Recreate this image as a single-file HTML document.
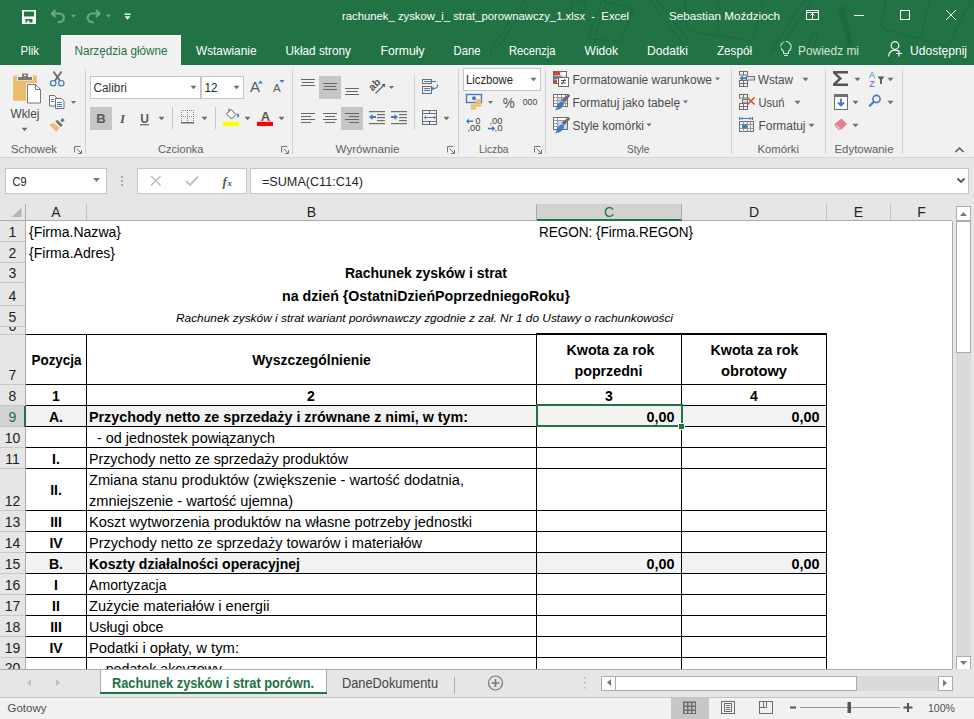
<!DOCTYPE html>
<html><head><meta charset="utf-8"><style>
html,body{margin:0;padding:0;width:974px;height:719px;overflow:hidden;background:#fff}
svg{display:block;font-family:"Liberation Sans",sans-serif}
</style></head><body>
<svg width="974" height="719" viewBox="0 0 974 719">
<rect x="0" y="0" width="974" height="65" fill="#217346" />
<rect x="61" y="35" width="120" height="30" fill="#f7f7f7" />
<rect x="62" y="36" width="119" height="29" fill="#f1f1f1" />
<rect x="0" y="65" width="974" height="92" fill="#f1f1f1" />
<rect x="0" y="157" width="974" height="1" fill="#d6d6d6" />
<rect x="0" y="158" width="974" height="62" fill="#e6e6e6" />
<g fill="#fff"><path d="M22 10h14v14h-14z M24 11.5v5h10v-5z M25.5 19v3.5h1.8v-2h2v2h3.2v-3.5z" fill-rule="evenodd"/></g>
<g fill="none" stroke="#6aa888" stroke-width="2.2"><path d="M52 13.5h7.5a4.3 4.3 0 0 1 0 8.6h-1.5"/><path d="M55.5 10l-3.5 3.5l3.5 3.5"/><path d="M99.5 13.5h-7.5a4.3 4.3 0 0 0 0 8.6h1.5"/><path d="M96 10l3.5 3.5l-3.5 3.5"/></g>
<path d="M71.0 14.8h5l-2.5 3z" fill="#6aa888"/>
<path d="M106.0 14.8h5l-2.5 3z" fill="#6aa888"/>
<rect x="124.5" y="13.5" width="6" height="1.4" fill="#fff"/><path d="M124.5 16.25h6l-3.0 3.5z" fill="#fff"/>
<g fill="none" stroke="#fff" stroke-width="1"><rect x="806.5" y="10.5" width="12" height="9"/><path d="M806.5 12.5h12"/><path d="M812.5 19v-5.5 M810.5 15.5l2-2l2 2"/><path d="M854 15.5h10"/><rect x="900.5" y="10.5" width="9" height="9"/><path d="M946 10l10 10 M956 10l-10 10"/></g>
<g fill="none" stroke="#d3e3d9" stroke-width="1.1"><path d="M783.5 53.5v-2.3c-1.6-1-2.7-2.6-2.7-4.5a5.2 5.2 0 0 1 10.4 0c0 1.9-1.1 3.5-2.7 4.5v2.3z"/><path d="M784 55.5h4"/></g>
<g fill="none" stroke="#fff" stroke-width="1.2"><circle cx="895" cy="45.5" r="3.8"/><path d="M888.5 56.5c0.5-4 3-6.3 6.5-6.3c1.5 0 2.8 0.4 3.8 1.2"/><path d="M899 50.5v6 M896 53.5h6"/></g>
<path d="M13 77a1.5 1.5 0 0 1 1.5-1.5h22.4v25.3h-22.4a1.5 1.5 0 0 1 -1.5-1.5z" fill="#e9bd6d"/>
<rect x="17" y="75.5" width="16" height="5" fill="#f1f1f1"/>
<path d="M18 77h4.2v-3.6h5.6v3.6h4.2v3h-14z" fill="#777"/><rect x="24" y="74.6" width="2" height="1.5" fill="#f1f1f1"/>
<rect x="26" y="83" width="16" height="21" fill="#f1f1f1"/>
<path d="M27.5 84.5h8l5 5v13.5h-13z" fill="#fff" stroke="#777" stroke-width="1"/><path d="M35.5 84.5v5h5" fill="none" stroke="#777" stroke-width="1"/>
<path d="M21.5 127.75h6l-3.0 3.5z" fill="#6e6e6e"/>
<g fill="none"><path d="M53.5 71.5l6.5 9.2 M61.5 71.5l-6.5 9.2" stroke="#6a6a6a" stroke-width="1.9"/><circle cx="53.2" cy="83.2" r="2.7" stroke="#3f7cc4" stroke-width="1.2"/><circle cx="61.3" cy="83.2" r="2.7" stroke="#3f7cc4" stroke-width="1.2"/></g>
<g stroke="#6e6e6e" stroke-width="1" fill="#fff"><path d="M49.5 95.5h5l2 2v8.5h-7z"/><path d="M55.5 98.5h6l2.5 2.5v7.5h-8.5z"/></g><g fill="#3f7cc4"><rect x="51" y="99" width="3" height="1"/><rect x="51" y="101" width="3" height="1"/><rect x="57" y="102" width="5" height="1"/><rect x="57" y="104" width="5" height="1"/><rect x="57" y="106" width="5" height="1"/></g>
<path d="M71.0 101.0h5l-2.5 3z" fill="#6e6e6e"/>
<path d="M62.2 118L64.8 120.1L62.4 122.6L60.5 120.4z M55.2 121.2L57.3 120L62.8 125L60.7 126.9z" fill="#6e6e6e"/><path d="M49.1 124.4L53.7 122.9L59.8 127.8L56.1 131.8z" fill="#e9bd6d"/>
<rect x="90" y="76" width="111" height="23" fill="#c6c6c6"/><rect x="91" y="77" width="109" height="21" fill="#fff"/>
<rect x="201" y="76" width="43" height="23" fill="#c6c6c6"/><rect x="202" y="77" width="41" height="21" fill="#fff"/>
<path d="M190.5 85.75h6l-3.0 3.5z" fill="#6e6e6e"/>
<path d="M233.5 85.75h6l-3.0 3.5z" fill="#6e6e6e"/>
<text x="250" y="92" font-size="15" fill="#595959">A</text><path d="M258 83.5l2.5-3l2.5 3z" fill="#3f7cc4"/>
<text x="273" y="92" font-size="11.5" fill="#595959">A</text><path d="M279.5 80h5l-2.5 3z" fill="#3f7cc4"/>
<rect x="90" y="107" width="22" height="23" fill="#c6c6c6"/>
<text x="101" y="123" font-size="13" font-weight="bold" fill="#595959" text-anchor="middle">B</text>
<text x="122.5" y="123" font-size="13" font-style="italic" font-weight="bold" fill="#595959" text-anchor="middle" font-family="Liberation Serif">I</text>
<text x="144.5" y="122.5" font-size="12" font-weight="bold" fill="#595959" text-anchor="middle">U</text><rect x="140" y="124.2" width="9" height="1.1" fill="#595959"/>
<path d="M158.5 116.75h6l-3.0 3.5z" fill="#6e6e6e"/>
<rect x="172" y="107" width="1" height="22" fill="#c6c6c6"/><rect x="215" y="107" width="1" height="22" fill="#c6c6c6"/>
<rect x="181" y="122" width="13" height="1.5" fill="#666"/><g fill="#888"><rect x="181" y="110" width="1" height="1"/><rect x="181" y="116" width="1" height="1"/><rect x="183" y="110" width="1" height="1"/><rect x="183" y="116" width="1" height="1"/><rect x="185" y="110" width="1" height="1"/><rect x="185" y="116" width="1" height="1"/><rect x="187" y="110" width="1" height="1"/><rect x="187" y="116" width="1" height="1"/><rect x="189" y="110" width="1" height="1"/><rect x="189" y="116" width="1" height="1"/><rect x="191" y="110" width="1" height="1"/><rect x="191" y="116" width="1" height="1"/><rect x="193" y="110" width="1" height="1"/><rect x="193" y="116" width="1" height="1"/><rect x="181" y="112" width="1" height="1"/><rect x="181" y="114" width="1" height="1"/><rect x="181" y="116" width="1" height="1"/><rect x="181" y="118" width="1" height="1"/><rect x="181" y="120" width="1" height="1"/><rect x="187" y="112" width="1" height="1"/><rect x="187" y="114" width="1" height="1"/><rect x="187" y="116" width="1" height="1"/><rect x="187" y="118" width="1" height="1"/><rect x="187" y="120" width="1" height="1"/><rect x="193" y="112" width="1" height="1"/><rect x="193" y="114" width="1" height="1"/><rect x="193" y="116" width="1" height="1"/><rect x="193" y="118" width="1" height="1"/><rect x="193" y="120" width="1" height="1"/></g>
<path d="M201.5 116.75h6l-3.0 3.5z" fill="#6e6e6e"/>
<rect x="223" y="121.8" width="16" height="4.2" fill="#ffff00"/>
<path d="M231 109.5l5 5l-4.5 4.5l-5-5z" fill="#fff" stroke="#555" stroke-width="1"/><path d="M229 111.5v-3" stroke="#555" stroke-width="1"/><path d="M237 113.5a2 2 0 0 1 1.5 3.5l-1 1z" fill="#3f7cc4"/>
<path d="M244.5 116.75h6l-3.0 3.5z" fill="#6e6e6e"/>
<text x="265.5" y="121" font-size="13" font-weight="bold" fill="#595959" text-anchor="middle">A</text><rect x="257" y="121.8" width="16" height="4.2" fill="#ff0000"/>
<path d="M278.5 116.75h6l-3.0 3.5z" fill="#6e6e6e"/>
<rect x="319" y="76" width="22" height="23" fill="#c6c6c6"/><rect x="341" y="107" width="22" height="23" fill="#c6c6c6"/>
<rect x="301" y="79" width="14" height="1" fill="#666666"/><rect x="302" y="82" width="12" height="1" fill="#666666"/><rect x="301" y="85" width="14" height="1" fill="#666666"/>
<rect x="323" y="83" width="14" height="1" fill="#666666"/><rect x="324" y="86" width="12" height="1" fill="#666666"/><rect x="323" y="89" width="14" height="1" fill="#666666"/>
<rect x="345" y="88" width="14" height="1" fill="#666666"/><rect x="346" y="91" width="12" height="1" fill="#666666"/><rect x="345" y="94" width="14" height="1" fill="#666666"/>
<rect x="301" y="113" width="14" height="1" fill="#666666"/><rect x="301" y="116" width="10" height="1" fill="#666666"/><rect x="301" y="119" width="14" height="1" fill="#666666"/><rect x="301" y="122" width="10" height="1" fill="#666666"/>
<rect x="323" y="113" width="14" height="1" fill="#666666"/><rect x="325" y="116" width="10" height="1" fill="#666666"/><rect x="323" y="119" width="14" height="1" fill="#666666"/><rect x="325" y="122" width="10" height="1" fill="#666666"/>
<rect x="345" y="113" width="14" height="1" fill="#666666"/><rect x="349" y="116" width="10" height="1" fill="#666666"/><rect x="345" y="119" width="14" height="1" fill="#666666"/><rect x="349" y="122" width="10" height="1" fill="#666666"/>
<text x="0" y="0" font-size="10.5" font-weight="bold" fill="#555" transform="translate(372.5 91.5) rotate(-45)">ab</text><path d="M375.5 93.5l9-9" stroke="#595959" stroke-width="1.1"/><path d="M385.2 83.8l-3.6 0.4l3.2 3.2z" fill="#595959"/>
<path d="M389.0 86.0h5l-2.5 3z" fill="#6e6e6e"/>
<rect x="369" y="111" width="16" height="1.2" fill="#6e6e6e"/><rect x="369" y="123" width="16" height="1.2" fill="#6e6e6e"/><rect x="377" y="114" width="8" height="1.2" fill="#6e6e6e"/><rect x="377" y="117" width="8" height="1.2" fill="#6e6e6e"/><rect x="377" y="120" width="8" height="1.2" fill="#6e6e6e"/>
<path d="M369 117l3.5-3v2h3.5v2h-3.5v2z" fill="#3f7cc4"/>
<rect x="391" y="111" width="16" height="1.2" fill="#6e6e6e"/><rect x="391" y="123" width="16" height="1.2" fill="#6e6e6e"/><rect x="399" y="114" width="8" height="1.2" fill="#6e6e6e"/><rect x="399" y="117" width="8" height="1.2" fill="#6e6e6e"/><rect x="399" y="120" width="8" height="1.2" fill="#6e6e6e"/>
<path d="M398 117l-3.5-3v2h-3.5v2h3.5v2z" fill="#3f7cc4"/>
<rect x="414" y="75" width="1" height="55" fill="#d0d0d0"/>
<g fill="none" stroke="#6e6e6e" stroke-width="1"><rect x="422.5" y="79.5" width="9" height="4"/><rect x="422.5" y="86.5" width="9" height="7"/></g><rect x="424" y="81" width="12" height="1" fill="#3f7cc4"/><rect x="424" y="88" width="6" height="1" fill="#3f7cc4"/><rect x="424" y="90" width="6" height="1" fill="#3f7cc4"/><path d="M437.5 84.5v1a3 3 0 0 1 -3 3h-2" fill="none" stroke="#3f7cc4" stroke-width="1.2"/><path d="M431 88.5l2.5-2.3v4.6z" fill="#3f7cc4"/>
<g fill="none" stroke="#6e6e6e" stroke-width="1"><rect x="422.5" y="110.5" width="14" height="14"/><path d="M423 113.5h13 M423 121.5h13 M429.5 111v2.5 M429.5 121.5v3"/></g><path d="M424.5 117.5h11" stroke="#3f7cc4" stroke-width="1"/><path d="M424 117.5l2-2v4z M436 117.5l-2-2v4z" fill="#3f7cc4"/>
<path d="M443.5 116.75h6l-3.0 3.5z" fill="#6e6e6e"/>
<rect x="463" y="68" width="78" height="23" fill="#c6c6c6"/><rect x="464" y="69" width="76" height="21" fill="#fff"/>
<path d="M530.5 77.75h6l-3.0 3.5z" fill="#6e6e6e"/>
<rect x="466.5" y="94.5" width="15" height="8" fill="none" stroke="#3f7cc4" stroke-width="1.4"/><circle cx="474" cy="98.3" r="2" fill="#3f7cc4"/><g fill="#e9bd6d"><ellipse cx="478.5" cy="100.5" rx="3.2" ry="1.3"/><ellipse cx="478.5" cy="103" rx="3.2" ry="1.3"/><ellipse cx="478.5" cy="105.5" rx="3.2" ry="1.3"/><ellipse cx="473.5" cy="105.5" rx="3.2" ry="1.3"/><ellipse cx="473.5" cy="108.3" rx="3.2" ry="1.3"/></g>
<path d="M488.0 101.0h5l-2.5 3z" fill="#6e6e6e"/>
<text x="508.7" y="108.3" font-size="15.5" fill="#505050" text-anchor="middle" textLength="12" lengthAdjust="spacingAndGlyphs">%</text>
<text x="530" y="104.8" font-size="9" fill="#404040" text-anchor="middle" textLength="14.5" lengthAdjust="spacingAndGlyphs">000</text>
<g font-size="9.5" fill="#404040"><text x="475.5" y="123.8" textLength="5" lengthAdjust="spacingAndGlyphs">0</text><text x="467.5" y="131.3" textLength="13" lengthAdjust="spacingAndGlyphs">,00</text><text x="489.5" y="124" textLength="13" lengthAdjust="spacingAndGlyphs">,00</text><text x="494.5" y="131.3" textLength="8" lengthAdjust="spacingAndGlyphs">,0</text></g><path d="M466 121.2l3-2.7v2h4.2v1.4h-4.2v2z" fill="#3f7cc4"/><path d="M495.2 128.5l-3-2.7v2h-4.2v1.4h4.2v2z" fill="#3f7cc4"/>
<g><rect x="553.5" y="71.5" width="13" height="12" fill="#fff" stroke="#6e6e6e" stroke-width="1"/><rect x="554" y="72" width="6" height="3.5" fill="#d9472b"/><rect x="554" y="76" width="8" height="3" fill="#3f7cc4"/><rect x="554" y="79.5" width="3" height="4" fill="#d9472b"/><path d="M561 72v4 M554 76h12" stroke="#bbb" stroke-width="0.8"/><rect x="558.5" y="77.5" width="10" height="9" fill="#fff" stroke="#6e6e6e" stroke-width="1"/><path d="M561 80.5h5 M561 83h5 M565 79l-3 5.5" stroke="#444" stroke-width="0.9"/></g>
<rect x="553.5" y="94.5" width="14" height="12" fill="#fff" stroke="#6e6e6e" stroke-width="1"/><rect x="557.5" y="97.5" width="8" height="6.5" fill="#c5d9f0"/><path d="M557.5 94.5v12 M561.5 94.5v12 M565.5 94.5v12 M554 97.5h13.5 M554 100.5h13.5 M554 103.5h13.5" stroke="#9a9a9a" stroke-width="1"/><rect x="553.5" y="94.5" width="14" height="12" fill="none" stroke="#6e6e6e" stroke-width="1"/><path d="M568.5 94.0l1.8 1.8l-6.2 6.6l-2.6-2.6z" fill="#6e6e6e"/><ellipse cx="560.2" cy="105.5" rx="4.6" ry="2.6" transform="rotate(-48 560.2 105.5)" fill="#3f7cc4"/><path d="M555.5 110.0l3-2" stroke="#3f7cc4" stroke-width="1.5"/>
<rect x="553.5" y="117.5" width="14" height="12" fill="#fff" stroke="#6e6e6e" stroke-width="1"/><rect x="557.5" y="120.5" width="10" height="8.5" fill="#c5d9f0"/><path d="M557.5 117.5v12 M554 120.5h13.5 M554 123.5h3.5 M554 126.5h3.5" stroke="#9a9a9a" stroke-width="1"/><rect x="553.5" y="117.5" width="14" height="12" fill="none" stroke="#6e6e6e" stroke-width="1"/><path d="M568.5 117.0l1.8 1.8l-6.2 6.6l-2.6-2.6z" fill="#6e6e6e"/><ellipse cx="560.2" cy="128.5" rx="4.6" ry="2.6" transform="rotate(-48 560.2 128.5)" fill="#3f7cc4"/><path d="M555.5 133.0l3-2" stroke="#3f7cc4" stroke-width="1.5"/>
<g fill="none" stroke="#6e6e6e" stroke-width="1"><rect x="739.5" y="71.5" width="8" height="3.5"/><path d="M743.5 71.5v3.5"/><rect x="739.5" y="80.5" width="8" height="6"/><path d="M743.5 80.5v6 M739.5 83.5h8"/><rect x="746.5" y="76.5" width="8" height="3.5"/></g><rect x="747.5" y="77.5" width="3" height="1.5" fill="#c5d9f0"/><rect x="751" y="77.5" width="3" height="1.5" fill="#c5d9f0"/><path d="M739.5 78.2l3.5-3v2h3.5v2h-3.5v2z" fill="#3f7cc4"/>
<g fill="none" stroke="#6e6e6e" stroke-width="1"><rect x="739.5" y="94.5" width="8" height="3.5"/><path d="M743.5 94.5v3.5"/><rect x="739.5" y="103.5" width="8" height="6"/><path d="M743.5 103.5v6 M739.5 106.5h8"/><rect x="742.5" y="99.5" width="5" height="3.5"/></g><rect x="743.5" y="100.5" width="3" height="1.5" fill="#c5d9f0"/><path d="M747.5 97.5l7 7 M754.5 97.5l-7 7" stroke="#d9472b" stroke-width="1.5"/>
<rect x="739" y="117" width="1.2" height="3" fill="#3f7cc4"/><rect x="751.8" y="117" width="1.2" height="3" fill="#3f7cc4"/><path d="M740.5 118.5h11" stroke="#3f7cc4" stroke-width="1"/><path d="M740.5 118.5l2-1.7v3.4z M751.5 118.5l-2-1.7v3.4z" fill="#3f7cc4"/><g fill="none" stroke="#6e6e6e" stroke-width="1"><rect x="739.5" y="121.5" width="14" height="10"/><path d="M739.5 124.5h14 M739.5 128.5h14 M743.5 121.5v10 M747.5 121.5v10 M750.5 121.5v10" stroke="#9a9a9a"/></g><rect x="742" y="124.5" width="5" height="4" fill="#3f7cc4"/>
<path d="M802.5 77.75h6l-3.0 3.5z" fill="#6e6e6e"/>
<path d="M794.5 100.75h6l-3.0 3.5z" fill="#6e6e6e"/>
<path d="M808.5 123.75h6l-3.0 3.5z" fill="#6e6e6e"/>
<path d="M833 71h15v2.4h-11.2l5.3 5.1l-5.3 5.1h11.2v2.4h-15v-2.3l5.5-5.2l-5.5-5.2z" fill="#555"/>
<path d="M854.5 77.75h6l-3.0 3.5z" fill="#6e6e6e"/>
<text x="872" y="77.8" font-size="9" fill="#3f7cc4" text-anchor="middle">A</text><text x="872" y="87" font-size="9" fill="#8b4fb0" text-anchor="middle">Z</text><path d="M877.5 76.5h7l-2.6 3.3v4.2h-1.8v-4.2z" fill="#595959"/>
<path d="M887.5 77.75h6l-3.0 3.5z" fill="#6e6e6e"/>
<rect x="834" y="94" width="14" height="16" fill="#6e6e6e"/><rect x="835" y="97" width="12" height="12" fill="#fff"/><path d="M841 98.5v7 M838 102.5l3 3l3-3" fill="none" stroke="#3f7cc4" stroke-width="1.8"/>
<path d="M852.5 100.75h6l-3.0 3.5z" fill="#6e6e6e"/>
<circle cx="876.5" cy="99" r="3.6" fill="none" stroke="#3f7cc4" stroke-width="1.6"/><path d="M873.8 101.8l-4 4" stroke="#3f7cc4" stroke-width="2.2" stroke-linecap="round"/>
<path d="M887.5 100.75h6l-3.0 3.5z" fill="#6e6e6e"/>
<path d="M841.5 118.5l5.5 5.5l-6 6l-2.3-0.2l-4-4l0-1.8z" fill="#e87c95"/><path d="M836.2 125l5 5" stroke="#f1f1f1" stroke-width="1"/>
<path d="M852.5 123.75h6l-3.0 3.5z" fill="#6e6e6e"/>
<path d="M955.5 152l4-4l4 4" fill="none" stroke="#555" stroke-width="1.5"/>
<rect x="85" y="69" width="1" height="85" fill="#d2d2d2"/>
<rect x="292" y="69" width="1" height="85" fill="#d2d2d2"/>
<rect x="458" y="69" width="1" height="85" fill="#d2d2d2"/>
<rect x="545" y="69" width="1" height="85" fill="#d2d2d2"/>
<rect x="731" y="69" width="1" height="85" fill="#d2d2d2"/>
<rect x="825" y="69" width="1" height="85" fill="#d2d2d2"/>
<rect x="902" y="69" width="1" height="85" fill="#d2d2d2"/>
<g fill="none" stroke="#777" stroke-width="1"><path d="M74.5 152.5v-6h6"/><path d="M76.5 148.5l4.5 4.5 M81.5 150v3.5h-3.5"/></g>
<g fill="none" stroke="#777" stroke-width="1"><path d="M281.5 152.5v-6h6"/><path d="M283.5 148.5l4.5 4.5 M288.5 150v3.5h-3.5"/></g>
<g fill="none" stroke="#777" stroke-width="1"><path d="M447.5 152.5v-6h6"/><path d="M449.5 148.5l4.5 4.5 M454.5 150v3.5h-3.5"/></g>
<g fill="none" stroke="#777" stroke-width="1"><path d="M534.5 152.5v-6h6"/><path d="M536.5 148.5l4.5 4.5 M541.5 150v3.5h-3.5"/></g>
<g fill="none" stroke="#1c6840" stroke-width="1.1" opacity="0.9"><path d="M463 24c-2-4-1-12 4-14c4-2 7 2 6 6l-3 10"/><path d="M529 3L495 51 M524 1L491 49 M495 51l-4 4l0-6"/><path d="M571 4l13-3l3 9l-13 4z"/><path d="M602 0L633 9L621 41L588 39L602 0 M606 3L594 38"/><path d="M650 0L683 44 M657 0L689 41 M683 44l3 4l1-6"/><path d="M685 0L686 27Q688 31 700 33L753 41L763 0 M718 0L718 35"/><path d="M804 0L774 47 M811 2L780 49 M774 47l-3 6l6-4"/><path d="M805 54l8-20c2-3 5-2 5 1l-7 19"/><path d="M886 0L881 25Q882 29 890 31L948 46L971 0 M929 0L921 38"/></g>
<path d="M838 9Q841 4 845 8L853 44L848 47z" fill="#1c6840" opacity="0.8"/>
<text x="342" y="20" font-size="11" fill="#fff" textLength="287" lengthAdjust="spacingAndGlyphs" >rachunek_ zyskow_i_ strat_porownawczy_1.xlsx  -  Excel</text>
<text x="669" y="20" font-size="11" fill="#fff" textLength="111" lengthAdjust="spacingAndGlyphs" >Sebastian Moździoch</text>
<text x="20.5" y="55" font-size="12" fill="#fff" textLength="18.5" lengthAdjust="spacingAndGlyphs" >Plik</text>
<text x="196" y="55" font-size="12" fill="#fff" textLength="60.5" lengthAdjust="spacingAndGlyphs" >Wstawianie</text>
<text x="285.5" y="55" font-size="12" fill="#fff" textLength="65.5" lengthAdjust="spacingAndGlyphs" >Układ strony</text>
<text x="380.5" y="55" font-size="12" fill="#fff" textLength="44.0" lengthAdjust="spacingAndGlyphs" >Formuły</text>
<text x="453.5" y="55" font-size="12" fill="#fff" textLength="27.0" lengthAdjust="spacingAndGlyphs" >Dane</text>
<text x="509" y="55" font-size="12" fill="#fff" textLength="46.5" lengthAdjust="spacingAndGlyphs" >Recenzja</text>
<text x="584.5" y="55" font-size="12" fill="#fff" textLength="33.5" lengthAdjust="spacingAndGlyphs" >Widok</text>
<text x="647" y="55" font-size="12" fill="#fff" textLength="41" lengthAdjust="spacingAndGlyphs" >Dodatki</text>
<text x="717" y="55" font-size="12" fill="#fff" textLength="35" lengthAdjust="spacingAndGlyphs" >Zespół</text>
<text x="910" y="55" font-size="12" fill="#fff" textLength="57" lengthAdjust="spacingAndGlyphs" >Udostępnij</text>
<text x="74.5" y="55" font-size="12" fill="#217346" textLength="93" lengthAdjust="spacingAndGlyphs" >Narzędzia główne</text>
<text x="798" y="55" font-size="12" fill="#d3e3d9" textLength="61" lengthAdjust="spacingAndGlyphs" >Powiedz mi</text>
<text x="10.5" y="118" font-size="12" fill="#4a4a4a" textLength="29" lengthAdjust="spacingAndGlyphs" >Wklej</text>
<text x="11" y="153" font-size="11" fill="#606060" textLength="46" lengthAdjust="spacingAndGlyphs" >Schowek</text>
<text x="158" y="153" font-size="11" fill="#606060" textLength="45.5" lengthAdjust="spacingAndGlyphs" >Czcionka</text>
<text x="335.5" y="153" font-size="11" fill="#606060" textLength="64.0" lengthAdjust="spacingAndGlyphs" >Wyrównanie</text>
<text x="479" y="153" font-size="11" fill="#606060" textLength="29.5" lengthAdjust="spacingAndGlyphs" >Liczba</text>
<text x="627" y="153" font-size="11" fill="#606060" textLength="22.5" lengthAdjust="spacingAndGlyphs" >Style</text>
<text x="757.5" y="153" font-size="11" fill="#606060" textLength="41.5" lengthAdjust="spacingAndGlyphs" >Komórki</text>
<text x="834.5" y="153" font-size="11" fill="#606060" textLength="59.0" lengthAdjust="spacingAndGlyphs" >Edytowanie</text>
<text x="93.5" y="92" font-size="12" fill="#333" textLength="33.5" lengthAdjust="spacingAndGlyphs" >Calibri</text>
<text x="204.5" y="92" font-size="12" fill="#262626" textLength="13" lengthAdjust="spacingAndGlyphs" >12</text>
<text x="466" y="84" font-size="12" fill="#262626" textLength="47" lengthAdjust="spacingAndGlyphs" >Liczbowe</text>
<text x="572.5" y="84" font-size="12" fill="#4a4a4a" textLength="139.5" lengthAdjust="spacingAndGlyphs" >Formatowanie warunkowe</text>
<text x="572.5" y="107" font-size="12" fill="#4a4a4a" textLength="107.5" lengthAdjust="spacingAndGlyphs" >Formatuj jako tabelę</text>
<text x="572.5" y="129.5" font-size="12" fill="#4a4a4a" textLength="71.5" lengthAdjust="spacingAndGlyphs" >Style komórki</text>
<path d="M715 77.5h5l-2.5 3z M683 100.5h5l-2.5 3z M646.5 123.5h5l-2.5 3z" fill="#6e6e6e"/>
<text x="758" y="84" font-size="12" fill="#4a4a4a" textLength="35" lengthAdjust="spacingAndGlyphs" >Wstaw</text>
<text x="758.5" y="107" font-size="12" fill="#4a4a4a" textLength="26" lengthAdjust="spacingAndGlyphs" >Usuń</text>
<text x="758.5" y="129.5" font-size="12" fill="#4a4a4a" textLength="47" lengthAdjust="spacingAndGlyphs" >Formatuj</text>
<rect x="5" y="168" width="102" height="26" fill="#c6c6c6" />
<rect x="6" y="169" width="100" height="24" fill="#fff" />
<text x="12.5" y="186" font-size="12" fill="#262626" textLength="14" lengthAdjust="spacingAndGlyphs" >C9</text>
<rect x="137" y="168" width="110" height="26" fill="#c6c6c6" />
<rect x="138" y="169" width="108" height="24" fill="#fff" />
<rect x="250" y="168" width="719" height="26" fill="#c6c6c6" />
<rect x="251" y="169" width="717" height="24" fill="#fff" />
<text x="262" y="186" font-size="12" fill="#262626" textLength="101" lengthAdjust="spacingAndGlyphs" >=SUMA(C11:C14)</text>
<rect x="0" y="220" width="952" height="1" fill="#ababab" />
<rect x="0" y="221" width="25" height="448" fill="#e6e6e6" />
<rect x="25" y="204" width="1" height="465" fill="#ababab" />
<rect x="26" y="221" width="926" height="448" fill="#fff" />
<rect x="952" y="204" width="1" height="466" fill="#ababab" />
<rect x="537" y="204" width="144" height="15" fill="#d2d2d2" />
<rect x="537" y="219" width="145" height="2" fill="#217346" />
<rect x="86" y="204" width="1" height="16" fill="#c0c0c0" />
<rect x="536" y="204" width="1" height="16" fill="#ababab" />
<rect x="681" y="204" width="1" height="16" fill="#ababab" />
<rect x="826" y="204" width="1" height="16" fill="#c0c0c0" />
<rect x="890" y="204" width="1" height="16" fill="#c0c0c0" />
<text x="56.0" y="217" font-size="14" fill="#222" text-anchor="middle" >A</text>
<text x="311.5" y="217" font-size="14" fill="#222" text-anchor="middle" >B</text>
<text x="609.0" y="217" font-size="14" fill="#217346" text-anchor="middle" >C</text>
<text x="754.0" y="217" font-size="14" fill="#222" text-anchor="middle" >D</text>
<text x="858.5" y="217" font-size="14" fill="#222" text-anchor="middle" >E</text>
<text x="921.5" y="217" font-size="14" fill="#222" text-anchor="middle" >F</text>
<rect x="0" y="241" width="25" height="1" fill="#c8c8c8" />
<text x="12.5" y="237" font-size="14" fill="#222" text-anchor="middle" >1</text>
<rect x="0" y="262" width="25" height="1" fill="#c8c8c8" />
<text x="12.5" y="258" font-size="14" fill="#222" text-anchor="middle" >2</text>
<rect x="0" y="282" width="25" height="1" fill="#c8c8c8" />
<text x="12.5" y="278" font-size="14" fill="#222" text-anchor="middle" >3</text>
<rect x="0" y="305" width="25" height="1" fill="#c8c8c8" />
<text x="12.5" y="301" font-size="14" fill="#222" text-anchor="middle" >4</text>
<rect x="0" y="326" width="25" height="1" fill="#c8c8c8" />
<text x="12.5" y="322" font-size="14" fill="#222" text-anchor="middle" >5</text>
<rect x="0" y="334" width="25" height="1" fill="#c8c8c8" />
<text x="12.5" y="331" font-size="14" fill="#222" text-anchor="middle" clip-path="url(#r6)">6</text>
<rect x="0" y="384" width="25" height="1" fill="#c8c8c8" />
<text x="12.5" y="380" font-size="14" fill="#222" text-anchor="middle" >7</text>
<rect x="0" y="405" width="25" height="1" fill="#c8c8c8" />
<text x="12.5" y="401" font-size="14" fill="#222" text-anchor="middle" >8</text>
<rect x="0" y="426" width="25" height="1" fill="#c8c8c8" />
<rect x="0" y="406" width="24" height="20" fill="#d2d2d2" />
<rect x="24" y="406" width="2" height="21" fill="#217346" />
<text x="12.5" y="422" font-size="14" fill="#217346" text-anchor="middle" >9</text>
<rect x="0" y="447" width="25" height="1" fill="#c8c8c8" />
<text x="12.5" y="443" font-size="14" fill="#222" text-anchor="middle" >10</text>
<rect x="0" y="468" width="25" height="1" fill="#c8c8c8" />
<text x="12.5" y="464" font-size="14" fill="#222" text-anchor="middle" >11</text>
<rect x="0" y="510" width="25" height="1" fill="#c8c8c8" />
<text x="12.5" y="506" font-size="14" fill="#222" text-anchor="middle" >12</text>
<rect x="0" y="531" width="25" height="1" fill="#c8c8c8" />
<text x="12.5" y="527" font-size="14" fill="#222" text-anchor="middle" >13</text>
<rect x="0" y="552" width="25" height="1" fill="#c8c8c8" />
<text x="12.5" y="548" font-size="14" fill="#222" text-anchor="middle" >14</text>
<rect x="0" y="573" width="25" height="1" fill="#c8c8c8" />
<text x="12.5" y="569" font-size="14" fill="#222" text-anchor="middle" >15</text>
<rect x="0" y="594" width="25" height="1" fill="#c8c8c8" />
<text x="12.5" y="590" font-size="14" fill="#222" text-anchor="middle" >16</text>
<rect x="0" y="615" width="25" height="1" fill="#c8c8c8" />
<text x="12.5" y="611" font-size="14" fill="#222" text-anchor="middle" >17</text>
<rect x="0" y="636" width="25" height="1" fill="#c8c8c8" />
<text x="12.5" y="632" font-size="14" fill="#222" text-anchor="middle" >18</text>
<rect x="0" y="657" width="25" height="1" fill="#c8c8c8" />
<text x="12.5" y="653" font-size="14" fill="#222" text-anchor="middle" >19</text>
<clipPath id="r6"><rect x="0" y="327" width="25" height="7"/></clipPath>
<clipPath id="r20"><rect x="0" y="658" width="952" height="11"/></clipPath>
<text x="12.5" y="673" font-size="14" fill="#222" text-anchor="middle" clip-path="url(#r20)">20</text>
<rect x="26" y="406" width="800" height="20" fill="#f2f2f2" />
<rect x="26" y="553" width="800" height="20" fill="#f2f2f2" />
<rect x="26" y="334" width="800" height="1" fill="#000" />
<rect x="26" y="384" width="800" height="1" fill="#000" />
<rect x="26" y="405" width="800" height="1" fill="#000" />
<rect x="26" y="426" width="800" height="1" fill="#000" />
<rect x="26" y="447" width="800" height="1" fill="#000" />
<rect x="26" y="468" width="800" height="1" fill="#000" />
<rect x="26" y="510" width="800" height="1" fill="#000" />
<rect x="26" y="531" width="800" height="1" fill="#000" />
<rect x="26" y="552" width="800" height="1" fill="#000" />
<rect x="26" y="573" width="800" height="1" fill="#000" />
<rect x="26" y="594" width="800" height="1" fill="#000" />
<rect x="26" y="615" width="800" height="1" fill="#000" />
<rect x="26" y="636" width="800" height="1" fill="#000" />
<rect x="26" y="657" width="800" height="1" fill="#000" />
<rect x="536" y="333" width="291" height="1" fill="#000" />
<rect x="86" y="334" width="1" height="335" fill="#000" />
<rect x="681" y="334" width="1" height="335" fill="#000" />
<rect x="536" y="333" width="1" height="336" fill="#000" />
<rect x="826" y="333" width="1" height="336" fill="#000" />
<rect x="536" y="404" width="147" height="2" fill="#217346" />
<rect x="536" y="425" width="142" height="2" fill="#217346" />
<rect x="536" y="404" width="2" height="23" fill="#217346" />
<rect x="681" y="404" width="2" height="19" fill="#217346" />
<rect x="678" y="423" width="7" height="7" fill="#fff" />
<rect x="679" y="424" width="5" height="5" fill="#217346" />
<text x="29" y="237" font-size="14" fill="#000" textLength="92" lengthAdjust="spacingAndGlyphs" >{Firma.Nazwa}</text>
<text x="29" y="258" font-size="14" fill="#000" textLength="86" lengthAdjust="spacingAndGlyphs" >{Firma.Adres}</text>
<text x="539" y="237" font-size="14" fill="#000" textLength="154" lengthAdjust="spacingAndGlyphs" >REGON: {Firma.REGON}</text>
<text x="426" y="278" font-size="14" fill="#000" font-weight="bold" text-anchor="middle" textLength="162" lengthAdjust="spacingAndGlyphs" >Rachunek zysków i strat</text>
<text x="426" y="301" font-size="14" fill="#000" font-weight="bold" text-anchor="middle" textLength="288" lengthAdjust="spacingAndGlyphs" >na dzień {OstatniDzieńPoprzedniegoRoku}</text>
<text x="424.5" y="321.5" font-size="10.5" fill="#000" font-style="italic" text-anchor="middle" textLength="497" lengthAdjust="spacingAndGlyphs" >Rachunek zysków i strat wariant porównawczy zgodnie z zał. Nr 1 do Ustawy o rachunkowości</text>
<text x="56.5" y="365" font-size="14" fill="#000" font-weight="bold" text-anchor="middle" textLength="50" lengthAdjust="spacingAndGlyphs" >Pozycja</text>
<text x="311.5" y="365" font-size="14" fill="#000" font-weight="bold" text-anchor="middle" textLength="118.5" lengthAdjust="spacingAndGlyphs" >Wyszczególnienie</text>
<text x="610.5" y="355" font-size="14" fill="#000" font-weight="bold" text-anchor="middle" textLength="88" lengthAdjust="spacingAndGlyphs" >Kwota za rok</text>
<text x="608.5" y="376" font-size="14" fill="#000" font-weight="bold" text-anchor="middle" textLength="68" lengthAdjust="spacingAndGlyphs" >poprzedni</text>
<text x="754.5" y="355" font-size="14" fill="#000" font-weight="bold" text-anchor="middle" textLength="88" lengthAdjust="spacingAndGlyphs" >Kwota za rok</text>
<text x="754" y="376" font-size="14" fill="#000" font-weight="bold" text-anchor="middle" textLength="66" lengthAdjust="spacingAndGlyphs" >obrotowy</text>
<text x="56" y="401" font-size="14" fill="#000" font-weight="bold" text-anchor="middle" >1</text>
<text x="311" y="401" font-size="14" fill="#000" font-weight="bold" text-anchor="middle" >2</text>
<text x="609" y="401" font-size="14" fill="#000" font-weight="bold" text-anchor="middle" >3</text>
<text x="754" y="401" font-size="14" fill="#000" font-weight="bold" text-anchor="middle" >4</text>
<text x="56" y="422" font-size="14" fill="#000" font-weight="bold" text-anchor="middle" >A.</text>
<text x="89" y="422" font-size="14" fill="#000" font-weight="bold" textLength="379" lengthAdjust="spacingAndGlyphs" >Przychody netto ze sprzedaży i zrównane z nimi, w tym:</text>
<text x="56" y="443" font-size="14" fill="#000" font-weight="bold" text-anchor="middle" ></text>
<text x="97" y="443" font-size="14" fill="#000" textLength="178" lengthAdjust="spacingAndGlyphs" >- od jednostek powiązanych</text>
<text x="56" y="464" font-size="14" fill="#000" font-weight="bold" text-anchor="middle" >I.</text>
<text x="89" y="464" font-size="14" fill="#000" textLength="259" lengthAdjust="spacingAndGlyphs" >Przychody netto ze sprzedaży produktów</text>
<text x="56" y="527" font-size="14" fill="#000" font-weight="bold" text-anchor="middle" >III</text>
<text x="89" y="527" font-size="14" fill="#000" textLength="383" lengthAdjust="spacingAndGlyphs" >Koszt wytworzenia produktów na własne potrzeby jednostki</text>
<text x="56" y="548" font-size="14" fill="#000" font-weight="bold" text-anchor="middle" >IV</text>
<text x="89" y="548" font-size="14" fill="#000" textLength="333" lengthAdjust="spacingAndGlyphs" >Przychody netto ze sprzedaży towarów i materiałów</text>
<text x="56" y="569" font-size="14" fill="#000" font-weight="bold" text-anchor="middle" >B.</text>
<text x="89" y="569" font-size="14" fill="#000" font-weight="bold" textLength="211" lengthAdjust="spacingAndGlyphs" >Koszty działalności operacyjnej</text>
<text x="56" y="590" font-size="14" fill="#000" font-weight="bold" text-anchor="middle" >I</text>
<text x="89" y="590" font-size="14" fill="#000" textLength="77.5" lengthAdjust="spacingAndGlyphs" >Amortyzacja</text>
<text x="56" y="611" font-size="14" fill="#000" font-weight="bold" text-anchor="middle" >II</text>
<text x="89" y="611" font-size="14" fill="#000" textLength="180.5" lengthAdjust="spacingAndGlyphs" >Zużycie materiałów i energii</text>
<text x="56" y="632" font-size="14" fill="#000" font-weight="bold" text-anchor="middle" >III</text>
<text x="89" y="632" font-size="14" fill="#000" textLength="74.5" lengthAdjust="spacingAndGlyphs" >Usługi obce</text>
<text x="56" y="653" font-size="14" fill="#000" font-weight="bold" text-anchor="middle" >IV</text>
<text x="89" y="653" font-size="14" fill="#000" textLength="150" lengthAdjust="spacingAndGlyphs" >Podatki i opłaty, w tym:</text>
<text x="56" y="495" font-size="14" fill="#000" font-weight="bold" text-anchor="middle" >II.</text>
<text x="89" y="485" font-size="14" fill="#000" textLength="375" lengthAdjust="spacingAndGlyphs" >Zmiana stanu produktów (zwiększenie - wartość dodatnia,</text>
<text x="89" y="506" font-size="14" fill="#000" textLength="204" lengthAdjust="spacingAndGlyphs" >zmniejszenie - wartość ujemna)</text>
<text x="97" y="674" font-size="14" fill="#000" textLength="125" lengthAdjust="spacingAndGlyphs" clip-path="url(#r20)">- podatek akcyzowy</text>
<text x="674.5" y="422" font-size="14" fill="#000" font-weight="bold" text-anchor="end" textLength="28" lengthAdjust="spacingAndGlyphs" >0,00</text>
<text x="819.5" y="422" font-size="14" fill="#000" font-weight="bold" text-anchor="end" textLength="28" lengthAdjust="spacingAndGlyphs" >0,00</text>
<text x="674.5" y="569" font-size="14" fill="#000" font-weight="bold" text-anchor="end" textLength="28" lengthAdjust="spacingAndGlyphs" >0,00</text>
<text x="819.5" y="569" font-size="14" fill="#000" font-weight="bold" text-anchor="end" textLength="28" lengthAdjust="spacingAndGlyphs" >0,00</text>
<rect x="952" y="204" width="22" height="466" fill="#e6e6e6" />
<rect x="952" y="221" width="1" height="449" fill="#ababab" />
<rect x="956" y="206" width="15" height="15" fill="#ababab" />
<rect x="957" y="207" width="13" height="13" fill="#fff" />
<rect x="956" y="221" width="15" height="435" fill="#dadada" />
<rect x="956" y="221" width="15" height="132" fill="#ababab" />
<rect x="957" y="222" width="13" height="130" fill="#fff" />
<rect x="956" y="656" width="15" height="14" fill="#ababab" />
<rect x="957" y="657" width="13" height="12" fill="#fff" />
<rect x="0" y="669" width="974" height="29" fill="#e6e6e6" />
<rect x="0" y="669" width="952" height="1" fill="#ababab" />
<rect x="0" y="697" width="974" height="1" fill="#c6c6c6" />
<rect x="0" y="698" width="974" height="21" fill="#f1f1f1" />
<rect x="100" y="669" width="227" height="25" fill="#ababab" />
<rect x="101" y="670" width="225" height="22" fill="#fff" />
<rect x="100" y="692" width="227" height="2" fill="#217346" />
<text x="112" y="688" font-size="14" fill="#217346" font-weight="bold" textLength="202" lengthAdjust="spacingAndGlyphs" >Rachunek zysków i strat porówn.</text>
<text x="342" y="688" font-size="14" fill="#444" textLength="96" lengthAdjust="spacingAndGlyphs" >DaneDokumentu</text>
<rect x="454" y="677" width="1" height="17" fill="#ababab" />
<rect x="601" y="676" width="15" height="15" fill="#ababab" />
<rect x="602" y="677" width="13" height="13" fill="#fff" />
<rect x="616" y="676" width="322" height="15" fill="#dadada" />
<rect x="615" y="676" width="242" height="15" fill="#ababab" />
<rect x="616" y="677" width="240" height="13" fill="#fff" />
<rect x="938" y="676" width="15" height="15" fill="#ababab" />
<rect x="939" y="677" width="13" height="13" fill="#fff" />
<text x="7.5" y="712" font-size="11" fill="#505050" textLength="39" lengthAdjust="spacingAndGlyphs" >Gotowy</text>
<rect x="671" y="698" width="38" height="21" fill="#c6c6c6" />
<text x="955" y="712" font-size="11" fill="#505050" text-anchor="end" textLength="27" lengthAdjust="spacingAndGlyphs" >100%</text>
<path d="M93.0 178.0h7l-3.5 4z" fill="#777"/>
<g fill="#a8a8a8"><rect x="121" y="176" width="2" height="2"/><rect x="121" y="180" width="2" height="2"/><rect x="121" y="184" width="2" height="2"/></g>
<path d="M151 176l9.5 9.5 M160.5 176l-9.5 9.5" stroke="#b8b8b8" stroke-width="1.3"/>
<path d="M186 181l4 4l8-8.5" fill="none" stroke="#c4c4c4" stroke-width="2"/>
<text x="222.5" y="185.5" font-size="13" font-style="italic" font-weight="bold" font-family="Liberation Serif" fill="#555">f</text><text x="227.5" y="186" font-size="9" font-style="italic" font-weight="bold" font-family="Liberation Serif" fill="#555">x</text>
<path d="M957.5 178.5l3.5 3.5l3.5-3.5" fill="none" stroke="#555" stroke-width="1.8"/>
<path d="M21.5 207.5v9.5h-9.5z" fill="#b5b5b5"/>
<path d="M960 216h7l-3.5-4z" fill="#777"/>
<path d="M960 661h7l-3.5 4z" fill="#777"/>
<path d="M31 679v7l-4-3.5z" fill="#bdbdbd"/><path d="M56 679v7l4-3.5z" fill="#bdbdbd"/>
<circle cx="495.5" cy="683" r="7" fill="none" stroke="#777" stroke-width="1.2"/><path d="M495.5 679v8 M491.5 683h8" stroke="#777" stroke-width="1.6"/>
<g fill="#b0b0b0"><rect x="584" y="677" width="1.5" height="1.5"/><rect x="584" y="682" width="1.5" height="1.5"/><rect x="584" y="687" width="1.5" height="1.5"/></g>
<path d="M611 679v7l-4-3.5z" fill="#777"/><path d="M943 679.5v7l4-3.5z" fill="#777"/>
<g fill="#6e6e6e"><rect x="683" y="701.5" width="13" height="12.5"/></g><g fill="#c6c6c6"><rect x="684.5" y="703" width="2.5" height="2.5"/><rect x="688.5" y="703" width="2.5" height="2.5"/><rect x="692.5" y="703" width="2.5" height="2.5"/><rect x="684.5" y="707" width="2.5" height="2.5"/><rect x="688.5" y="707" width="2.5" height="2.5"/><rect x="692.5" y="707" width="2.5" height="2.5"/><rect x="684.5" y="711" width="2.5" height="2"/><rect x="688.5" y="711" width="2.5" height="2"/><rect x="692.5" y="711" width="2.5" height="2"/></g>
<g fill="none" stroke="#6e6e6e" stroke-width="1"><rect x="721.5" y="701.5" width="13" height="12"/><rect x="724.5" y="703.5" width="7" height="8"/><path d="M726 705.5h4 M726 707.5h4 M726 709.5h4"/></g>
<g fill="none" stroke="#6e6e6e" stroke-width="1"><rect x="759.5" y="701.5" width="13" height="12"/><path d="M759.5 707.5h7 M763.5 701.5v6 M766.5 701.5v6"/></g>
<rect x="790" y="706.5" width="6" height="2" fill="#555"/><rect x="800" y="707" width="100" height="1" fill="#9a9a9a"/><rect x="847.5" y="702" width="3.5" height="11" fill="#555"/>
<path d="M903.5 707.5h9 M908 703v9" stroke="#555" stroke-width="2"/>
</svg></body></html>
